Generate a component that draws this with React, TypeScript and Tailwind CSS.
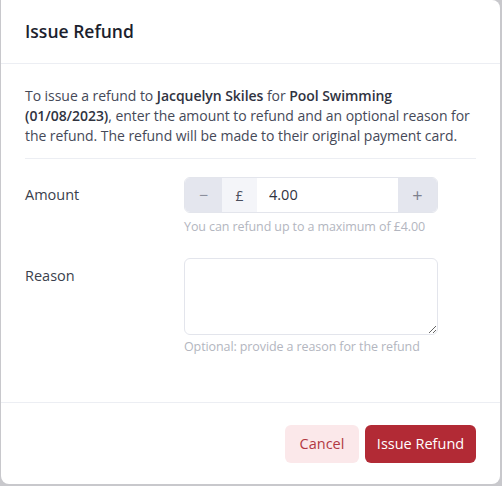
import React from "react";

export default function App() {
  const font = { fontFamily: '"Open Sans", "Noto Sans", sans-serif' };
  return (
    <div className="w-[502px] h-[486px] bg-[#c8c8cc] overflow-hidden flex" style={font}>
      <div className="ml-[1px] w-[499px] h-[484px] bg-white rounded-r-lg rounded-bl-lg flex flex-col">
        <div className="h-[64px] shrink-0 px-6 flex items-center border-b border-[#eceef3]">
          <h2 className="text-[17.5px] font-semibold text-[#1c1f2e]">Issue Refund</h2>
        </div>
        <div className="flex-1 px-6 pt-[22px]">
          <p className="text-[14px] tracking-[-0.05px] leading-[20px] text-[#454958] pb-[12px] border-b border-[#eceef3]">
            To issue a refund to <b className="font-semibold text-[#30333f]">Jacquelyn Skiles</b> for{" "}
            <b className="font-semibold text-[#30333f]">Pool Swimming (01/08/2023)</b>, enter the amount to
            refund and an optional reason for the refund. The refund will be made to their original payment card.
          </p>
          <div className="grid grid-cols-[159px_254px] mt-[18px]">
            <label className="pt-[8px] text-[14.5px] leading-[20px] text-[#3b3f4d]">Amount</label>
            <div>
              <div className="flex h-[36px] rounded-md border border-[#e3e5ec] overflow-hidden">
                <button className="w-[37px] bg-[#e4e6ee] text-[#8b8f9c] text-[16px] flex items-center justify-center">
                  −
                </button>
                <div className="w-[35px] bg-[#f4f5f9] text-[#4a4e5c] text-[14px] flex items-center justify-center">
                  £
                </div>
                <input
                  className="flex-1 min-w-0 px-3 text-[14.5px] text-[#30333f] outline-none bg-white"
                  defaultValue="4.00"
                  style={font}
                />
                <button className="w-[39px] bg-[#e4e6ee] text-[#7d818e] text-[18px] flex items-center justify-center">
                  +
                </button>
              </div>
              <p className="mt-1 text-[12.5px] tracking-[-0.1px] leading-[20px] text-[#b3b6c0] whitespace-nowrap">
                You can refund up to a maximum of £4.00
              </p>
            </div>
            <label className="mt-[21px] pt-[8px] text-[14.5px] leading-[20px] text-[#3b3f4d]">Reason</label>
            <div className="mt-[21px]">
              <textarea
                className="block w-full h-[77px] rounded-md border border-[#e3e5ec] outline-none p-2 text-[14px]"
                style={font}
              />
              <p className="mt-[2px] text-[12.5px] tracking-[-0.1px] leading-[20px] text-[#b3b6c0] whitespace-nowrap">
                Optional: provide a reason for the refund
              </p>
            </div>
          </div>
        </div>
        <div className="h-[82px] shrink-0 border-t border-[#eceef3] px-6 flex items-center justify-end gap-[6px]">
          <button className="h-[38px] w-[74px] rounded-md bg-[#fbe8ea] text-[#b23843] text-[14.5px]">Cancel</button>
          <button className="h-[38px] w-[111px] rounded-md bg-[#b22a35] text-white text-[14.5px]">Issue Refund</button>
        </div>
      </div>
    </div>
  );
}
